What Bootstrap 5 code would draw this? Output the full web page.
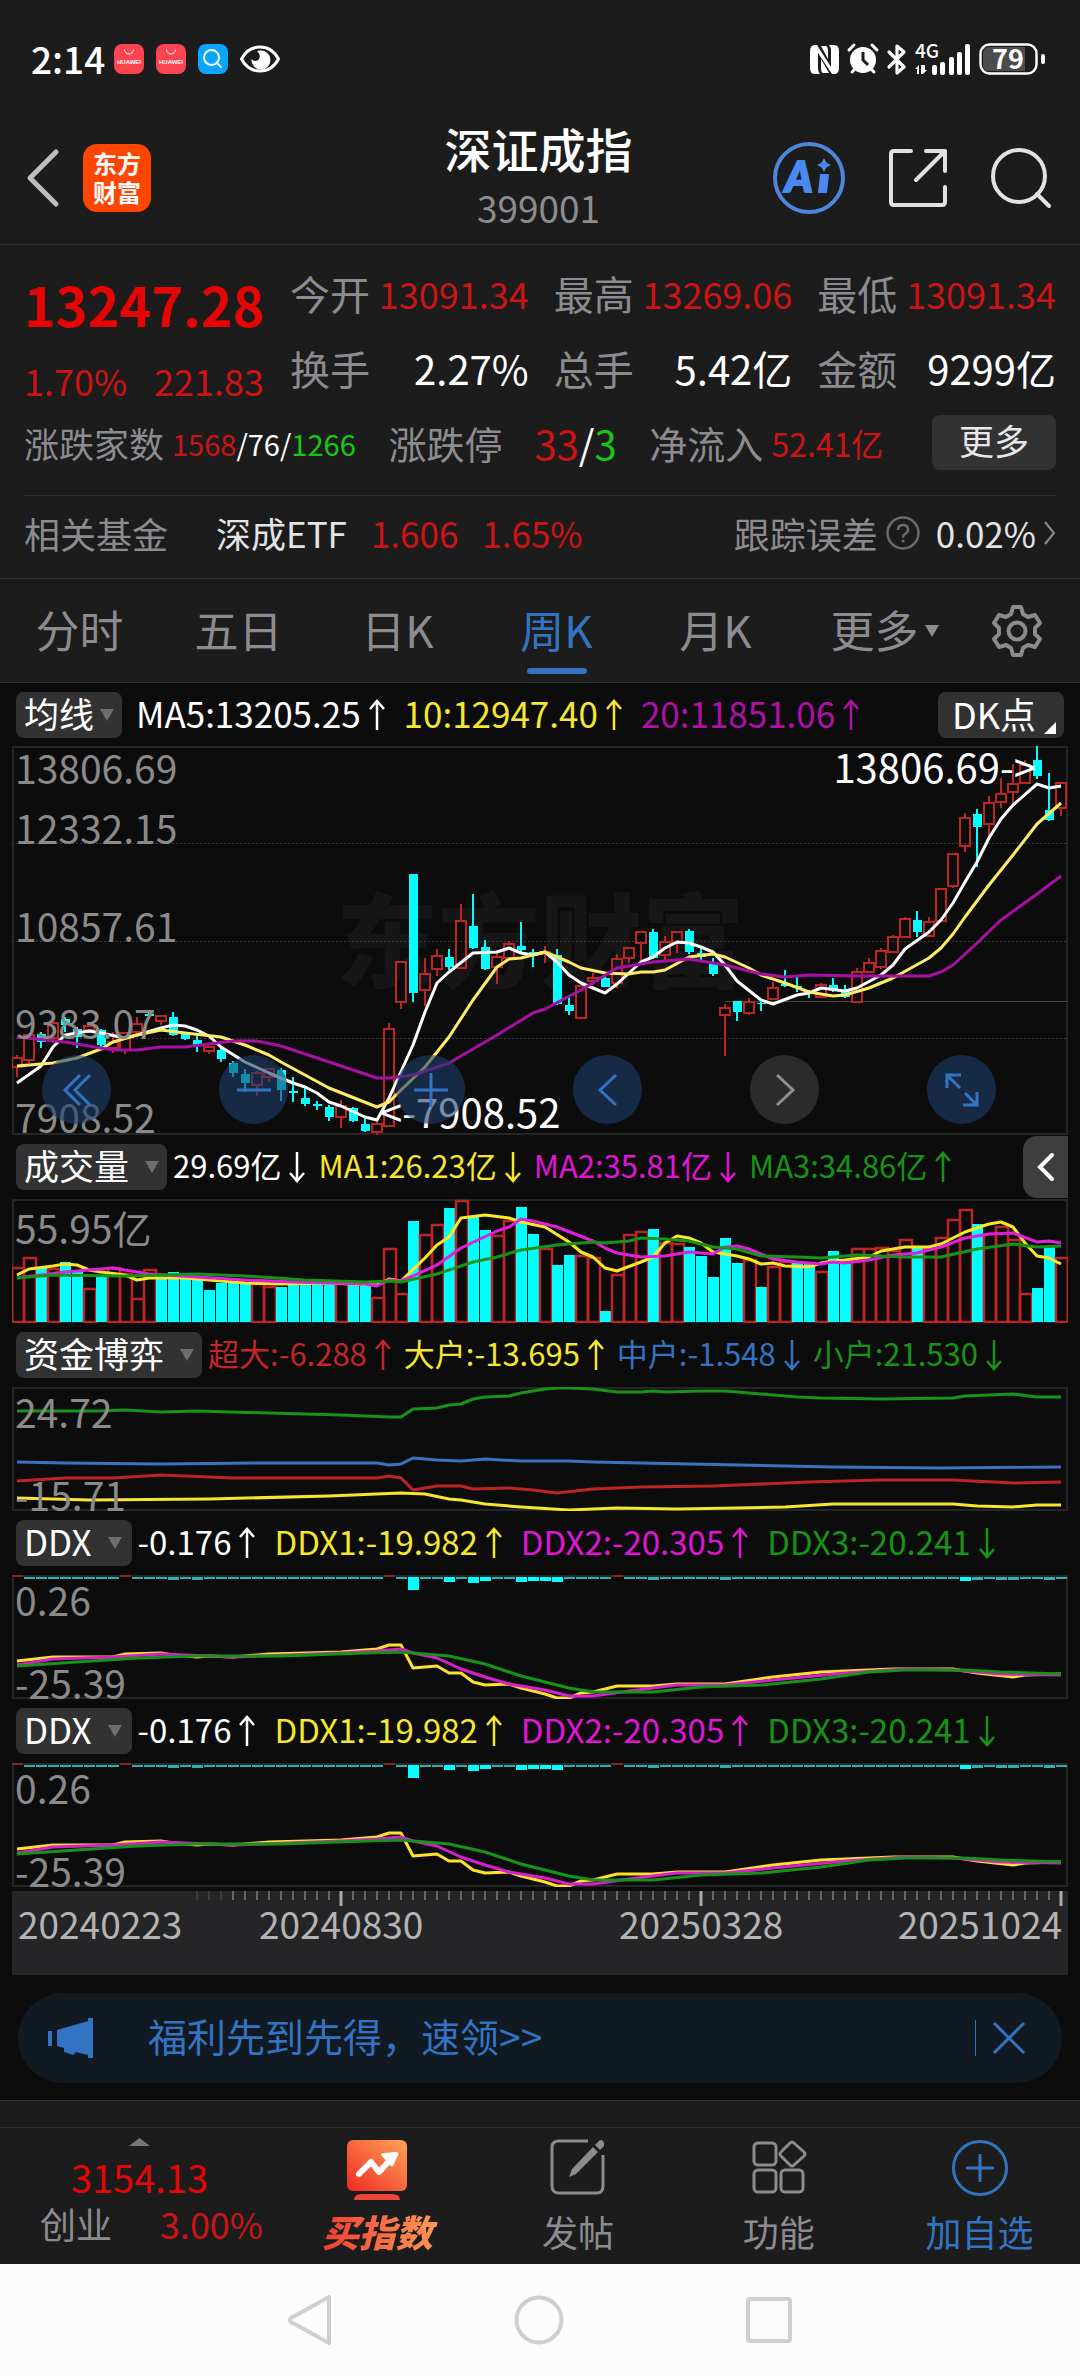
<!DOCTYPE html>
<html lang="zh-CN" data-bs-theme="dark">
<head>
<meta charset="utf-8">
<meta name="viewport" content="width=device-width, initial-scale=1">
<title>深证成指 399001</title>
<link href="https://cdn.jsdelivr.net/npm/bootstrap@5.3.0/dist/css/bootstrap.min.css" rel="stylesheet">
<style>
  :root {
    --panel: #1c1c1c; --canvas: #0c0c0c; --rule: #323236; --muted: #8c8c90;
    --up: #cc1414; --down: #14c814; --accent: #3374c2; --lemon: #f5e62e; --pink: #e015d6; --leaf: #179417;
  }
  body { background: var(--canvas); color: #fff; font-family: "Noto Sans CJK SC", "Noto Sans", sans-serif; font-size: 36px; line-height: 46px; }
  svg { display: block; overflow: visible; }
  button, a { color: inherit; text-decoration: none; white-space: nowrap; }
  button { border: 0; background: none; padding: 0; }
  .panel { background: var(--panel); }
  .hairline { border-bottom: 1px solid var(--rule); }
  .tone-muted { color: var(--muted); } .tone-up { color: var(--up); } .tone-down { color: var(--down); }
  .tone-accent { color: var(--accent); } .tone-lemon { color: var(--lemon); } .tone-soft { color: #e4e4e4; }
  .tone-pink { color: var(--pink); } .tone-leaf { color: var(--leaf); } .tone-violet { color: #b010a8; } .tone-brick { color: #c22626; }

  .sysbar { padding: 38px 35px 30px 31px; line-height: 42px; }
  .clock { font-size: 37px; font-weight: 500; margin-right: 9px; padding-bottom: 2px; line-height: 40px; }
  .gap-app { gap: 12px; } .gap-sys { gap: 8px; }

  .titlebar { padding: 12px 29px 10px 26px; }
  .titlebar h1 { font-size: 47px; line-height: 60px; margin: 0 0 6px; font-weight: 500; }
  .heading { margin-top: -4px; padding-bottom: 4px; }
  .code { font-size: 37px; }
  .brand { width: 68px; height: 68px; border-radius: 14px; background: #ff4600; font-size: 24px; line-height: 29px; font-weight: 700; margin-left: 24px; padding-bottom: 3px; }
  .tools { gap: 44px; }

  .quote { padding: 12px 24px 0; }
  .last { width: 240px; padding-top: 9px; }
  .last-price { font-size: 54px; line-height: 76px; font-weight: 700; color: #e60505; }
  .last-chg { line-height: 52px; margin-top: 12px; }
  .facts { display: grid; grid-template-columns: repeat(3, 1fr); column-gap: 25px; margin-left: 26px; }
  .fact, .breadth { height: 75px; white-space: nowrap; padding-bottom: 4px; }
  .label-lg, .num-lg { font-size: 40px; }
  .text-29 { font-size: 29px; } .text-32 { font-size: 32px; } .text-35 { font-size: 35px; } .text-38 { font-size: 38px; }
  .more-btn { background: #323232; border-radius: 8px; padding: 2px 27px 7px; color: #e8e8e8; font-size: 35px; }
  .fund { border-top: 1px solid #2a2a2a; margin-top: 13px; padding: 14px 0 22px; }

  .periods .nav-link { width: 159px; padding: 20px 0 0; font-size: 44px; line-height: 60px; color: var(--muted); text-align: center; }
  .periods .nav-link::after { content: ""; display: block; width: 60px; height: 6px; border-radius: 3px; margin: 9px auto 8px; }
  .periods .nav-link.active { color: var(--accent); }
  .periods .nav-link.active::after { background: var(--accent); }
  .tri-down { display: inline-block; border: 7px solid transparent; border-top: 12px solid currentColor; border-bottom: 0; }
  .periods .tri-down { position: absolute; margin: 26px 0 0 6px; }

  .charts { padding: 0 12px; }
  .readout { height: 64px; padding-left: 4px; white-space: nowrap; font-size: 31px; }
  .readout.first { height: 63px; font-size: 35px; }
  .readout.wide { font-size: 33px; }
  .picker { background: #323232; border-radius: 8px; font-size: 35px; line-height: 42px; padding: 0 8px 4px; margin-right: 6px; display: flex; align-items: center; gap: 16px; flex: none; }
  .picker .tri-down { color: #6e6e6e; margin-top: 4px; }
  .first .picker { gap: 6px; margin-right: 14px; }
  .wide .picker { padding-right: 10px; }
  .vals { gap: 12px; padding-bottom: 4px; } .first .vals { gap: 18px; } .wide .vals { gap: 18px; }
  .vals > span { display: flex; align-items: center; gap: 7px; }
  .vals svg { margin-top: 4px; flex: none; }
  .dk { background: #323232; border-radius: 8px; padding: 0 8px 4px 14px; font-size: 36px; line-height: 42px; margin-right: 4px; display: flex; gap: 8px; align-items: flex-end; }
  .fold { background: #3e3e3e; border-radius: 14px 0 0 14px; width: 45px; height: 62px; }
  .plot { position: relative; }
  .plot svg.draw { width: 100%; position: relative; overflow: hidden; }
  .tag { position: absolute; left: 3px; font-size: 39px; line-height: 40px; color: #8a8a8a; white-space: nowrap; }
  .mark-text { position: absolute; font-size: 40px; line-height: 40px; white-space: nowrap; }
  .watermark { position: absolute; inset: 125px 0 auto; text-align: center; font-size: 102px; line-height: 130px; font-weight: 900; color: #161616; }
  .pads { position: absolute; left: 30px; right: 72px; top: 309px; }
  .pad-btn { width: 69px; height: 69px; border-radius: 50%; background: rgba(30, 64, 110, .6); color: var(--accent); display: flex; align-items: center; justify-content: center; }
  .pad-btn.off { background: #2b2b2b; color: #8f8f8f; }
  .axis { background: #252527; margin-top: 4px; padding-bottom: 32px; color: #b4b4b4; font-size: 37px; line-height: 40px; }
  .dates { display: grid; grid-template-columns: 241px 360px 1fr; padding: 0 6px; margin-top: -3px; }

  .promo { margin: 18px 18px 17px; background: #111922; border-radius: 45px; padding: 22px 36px 22px 30px; font-size: 39px; line-height: 40px; color: var(--accent); }
  .promo-link { padding: 0 0 6px 54px; }
  .promo .split { width: 1px; height: 36px; background: var(--accent); margin-right: 16px; }
  .strip { height: 28px; border-top: 1px solid var(--rule); border-bottom: 1px solid #2a2a2a; }
  .dock { height: 136px; }
  .peek { width: 277px; padding: 10px 14px 0 40px; }
  .peek-last { color: #e60505; }
  .dock-item { flex: 1; display: flex; flex-direction: column; align-items: center; padding-top: 10px; gap: 10px; }
  .hot { font-weight: 900; font-style: italic; font-size: 37px; background: linear-gradient(90deg, #ee3a30, #ff9a56); -webkit-background-clip: text; background-clip: text; color: transparent; padding: 0 6px; }
  .softkeys { background: #fcfcfc; height: 112px; gap: 182px; }
</style>
</head>
<body>

<svg class="d-none" aria-hidden="true">
  <symbol id="rise" viewBox="0 0 18 32"><path d="M9 31V2M2 10l7-8 7 8" fill="none" stroke="currentColor" stroke-width="2.500"/></symbol>
  <symbol id="fall" viewBox="0 0 18 32"><path d="M9 1v29M2 22l7 8 7-8" fill="none" stroke="currentColor" stroke-width="2.500"/></symbol>
</svg>

<header class="panel hairline">
  <div class="sysbar d-flex justify-content-between align-items-center">
    <div class="d-flex align-items-center">
      <span class="clock">2:14</span>
      <div class="d-flex align-items-center gap-app">
        <svg width="30" height="30" viewBox="0 0 30 30"><rect width="30" height="30" rx="8" fill="#fb4450"/><path d="M10.500 5.500a4.500 4.500 0 0 0 9 0" fill="none" stroke="#fff"/><text x="15" y="19.500" font-size="6" font-weight="700" text-anchor="middle" fill="#fff" font-family="Liberation Sans">HUAWEI</text></svg>
        <svg width="30" height="30" viewBox="0 0 30 30"><rect width="30" height="30" rx="8" fill="#fb4450"/><path d="M10.500 5.500a4.500 4.500 0 0 0 9 0" fill="none" stroke="#fff"/><text x="15" y="19.500" font-size="6" font-weight="700" text-anchor="middle" fill="#fff" font-family="Liberation Sans">HUAWEI</text></svg>
        <svg width="30" height="30" viewBox="0 0 30 30"><rect width="30" height="30" rx="8" fill="#08a6fc"/><g fill="none" stroke="#fff" stroke-width="2" stroke-linecap="round"><circle cx="13.500" cy="13.500" r="7.500"/><path d="m19 19 4 4"/></g></svg>
        <svg width="40" height="30" viewBox="0 0 40 30"><path d="M1.500 15C10-1 30-1 38.500 15 30 31 10 31 1.500 15z" fill="none" stroke="#fff" stroke-width="3"/><path d="M20 6.500a9.500 9.500 0 1 1-8.500 8.500c2 3 7 2.500 8-1 .8-3-.3-5-2.500-7z" fill="#fff"/></svg>
      </div>
    </div>
    <div class="d-flex align-items-center gap-sys">
      <svg width="29" height="29" viewBox="0 0 29 29"><path d="M5 0h2l14 22V6q0-4-2-6h5q5 0 5 6v17q0 6-5 6h-2L8 8v15q0 4 2 6H5q-5 0-5-6V6q0-6 5-6z" fill="#fff"/><path d="M11 1h5q2 1 2 4v9zM11 14l8 14h-6q-2-1-2-4z" fill="#fff"/></svg>
      <svg width="32" height="30" viewBox="0 0 32 30"><circle cx="16" cy="16" r="13" fill="#fff"/><path d="M16 8v8l5 5" fill="none" stroke="#1c1c1c" stroke-width="3"/><path d="M2 6l5-5M30 6l-5-5M5 28l3-3M27 28l-3-3" stroke="#fff" stroke-width="3" stroke-linecap="round"/></svg>
      <svg width="20" height="31" viewBox="0 0 20 31"><path d="M2 8l15 15-7 6V2l7 6L2 23" fill="none" stroke="#fff" stroke-width="3.200" stroke-linejoin="round" stroke-linecap="round"/></svg>
      <svg width="56" height="31" viewBox="0 0 56 31" fill="#fff"><text x="0" y="14" font-size="19" font-weight="500">4G</text><path d="M4 21v9H2V25H0zM6 21h2v9H6zM8 30l4-4h-2v-5H8z"/><rect x="17" y="21" width="5" height="10" rx="2"/><rect x="25" y="18" width="5" height="13" rx="2"/><rect x="34" y="13" width="5" height="18" rx="2"/><rect x="42" y="8" width="5" height="23" rx="2"/><rect x="50" y="0" width="5" height="31" rx="2"/></svg>
      <svg width="66" height="32" viewBox="0 0 66 32"><rect x="1.500" y="1.500" width="56" height="29" rx="9" fill="none" stroke="#fff" stroke-width="2.400"/><path d="M10 4h36v24H10q-6 0-6-6V10q0-6 6-6z" fill="#4c4c4c"/><rect x="62" y="11" width="4" height="10" rx="2" fill="#fff"/><text x="29" y="26" font-size="27" font-weight="700" text-anchor="middle" fill="#fff">79</text></svg>
    </div>
  </div>

  <div class="titlebar d-flex align-items-center">
    <div class="d-flex align-items-center flex-fill w-25">
      <button aria-label="返回"><svg width="33" height="56" viewBox="0 0 33 56"><path d="M30 2 4 28l26 26" fill="none" stroke="#bebebe" stroke-width="5" stroke-linecap="round" stroke-linejoin="round"/></svg></button>
      <a href="#" class="brand d-flex align-items-center text-center"><span class="w-100">东方<br>财富</span></a>
    </div>
    <div class="heading text-center">
      <h1>深证成指</h1>
      <div class="code tone-muted">399001</div>
    </div>
    <div class="tools d-flex align-items-center justify-content-end flex-fill w-25">
      <button aria-label="AI"><svg width="72" height="72" viewBox="0 0 72 72"><circle cx="36" cy="36" r="34" fill="none" stroke="#4f86dc" stroke-width="4"/><text x="12" y="50" font-family="Lato" font-weight="900" font-style="italic" font-size="42" fill="#4a8af0" stroke="#4a8af0" stroke-width="2">A</text><path d="M47 32h9l-2 19h-9z" fill="#4a8af0"/><path d="m51 17 2 4 4 2-4 2-2 4-2-4-4-2 4-2z" fill="#4a8af0" stroke="#4a8af0"/></svg></button>
      <button aria-label="分享"><svg width="58" height="58" viewBox="0 0 58 58" fill="none" stroke="#e2e2e2" stroke-width="4" stroke-linecap="round" stroke-linejoin="round"><path d="M22 2H5Q2 2 2 5v48q0 3 3 3h48q3 0 3-3V38M37 2h19v20M56 2 27 31"/></svg></button>
      <button aria-label="搜索"><svg width="60" height="60" viewBox="0 0 60 60" fill="none" stroke="#e2e2e2" stroke-width="4" stroke-linecap="round"><circle cx="28" cy="28" r="26"/><path d="m46 46 12 12"/></svg></button>
    </div>
  </div>
</header>

<section class="panel hairline quote">
  <div class="d-flex align-items-start">
    <div class="last">
      <div class="last-price">13247.28</div>
      <div class="last-chg d-flex justify-content-between tone-up"><span>1.70%</span><span>221.83</span></div>
    </div>
    <div class="facts flex-fill">
      <div class="fact d-flex align-items-center justify-content-between"><span class="label-lg tone-muted">今开</span><span class="tone-up">13091.34</span></div>
      <div class="fact d-flex align-items-center justify-content-between"><span class="label-lg tone-muted">最高</span><span class="tone-up">13269.06</span></div>
      <div class="fact d-flex align-items-center justify-content-between"><span class="label-lg tone-muted">最低</span><span class="tone-up">13091.34</span></div>
      <div class="fact d-flex align-items-center justify-content-between"><span class="label-lg tone-muted">换手</span><span class="num-lg">2.27%</span></div>
      <div class="fact d-flex align-items-center justify-content-between"><span class="label-lg tone-muted">总手</span><span class="num-lg">5.42亿</span></div>
      <div class="fact d-flex align-items-center justify-content-between"><span class="label-lg tone-muted">金额</span><span class="num-lg">9299亿</span></div>
    </div>
  </div>
  <div class="breadth d-flex align-items-center justify-content-between">
    <div class="d-flex align-items-center"><span class="tone-muted text-35">涨跌家数</span><span class="text-29 ms-2"><span class="tone-up">1568</span>/76/<span class="tone-down">1266</span></span></div>
    <div class="d-flex align-items-center"><span class="tone-muted text-38">涨跌停</span><span class="num-lg ms-4 ps-2"><span class="tone-up">33</span>/<span class="tone-down">3</span></span></div>
    <div class="d-flex align-items-center me-3"><span class="tone-muted text-38">净流入</span><span class="text-32 tone-up ms-2">52.41亿</span></div>
    <button class="more-btn">更多</button>
  </div>
  <div class="fund d-flex align-items-center">
    <span class="tone-muted me-5">相关基金</span>
    <a href="#" class="tone-soft text-35 me-4">深成ETF</a>
    <span class="tone-up text-35 me-4">1.606</span>
    <span class="tone-up text-35">1.65%</span>
    <a href="#" class="ms-auto d-flex align-items-center">
      <span class="tone-muted">跟踪误差</span>
      <svg class="ms-2 me-3" width="34" height="34" viewBox="0 0 34 34"><circle cx="17" cy="17" r="15.500" fill="none" stroke="#6c6c70" stroke-width="2.500"/><path d="M12 14q0-5 5-5t5 4.500q0 3-3 4.500-2 1-2 3.500" fill="none" stroke="#6c6c70" stroke-width="2.500"/><circle cx="17" cy="25" r="1.600" fill="#6c6c70"/></svg>
      <span class="tone-soft text-35">0.02%</span>
      <svg class="ms-2" width="12" height="24" viewBox="0 0 12 24"><path d="m1 1 9 11-9 11" fill="none" stroke="#8c8c90" stroke-width="2"/></svg>
    </a>
  </div>
</section>

<nav class="panel hairline periods d-flex align-items-center">
  <a class="nav-link" href="#">分时</a>
  <a class="nav-link" href="#">五日</a>
  <a class="nav-link" href="#">日K</a>
  <a class="nav-link active" href="#">周K</a>
  <a class="nav-link" href="#">月K</a>
  <a class="nav-link" href="#">更多<i class="tri-down"></i></a>
  <button class="mx-auto" aria-label="设置"><svg width="52" height="52" viewBox="0 0 52 52" fill="none" stroke="#8c8c90" stroke-width="4" stroke-linejoin="round"><path d="M22 2h8l2 7 5 3 7-2 5 8-5 5v6l5 5-5 8-7-2-5 3-2 7h-8l-2-7-5-3-7 2-5-8 5-5v-6l-5-5 5-8 7 2 5-3z"/><circle cx="26" cy="26" r="8.500"/></svg></button>
</nav>

<main class="charts">
  <div class="readout first d-flex align-items-center">
    <button class="picker">均线<i class="tri-down"></i></button>
    <div class="vals d-flex"><span>MA5:13205.25<svg width="18" height="32"><use href="#rise"/></svg></span><span class="tone-lemon">10:12947.40<svg width="18" height="32"><use href="#rise"/></svg></span><span class="tone-violet">20:11851.06<svg width="18" height="32"><use href="#rise"/></svg></span></div>
    <button class="dk ms-auto">DK点<svg width="12" height="12"><path d="M12 0v12H0z" fill="#fff"/></svg></button>
  </div>
  <div class="plot" id="kline">
    <div class="watermark">东方财富</div>
    <span class="tag" style="top:1px">13806.69</span><span class="tag" style="top:61px">12332.15</span><span class="tag" style="top:159px">10857.61</span><span class="tag" style="top:256px">9383.07</span><span class="tag" style="top:350px">7908.52</span>
    <span class="mark-text" style="top:0;right:32px">13806.69-&gt;</span>
    <span class="mark-text" style="top:345px;left:368px">&lt;-7908.52</span>
    <div class="pads d-flex justify-content-between">
      <button class="pad-btn" aria-label="最早"><svg width="30" height="34" viewBox="0 0 30 34" fill="none" stroke="currentColor" stroke-width="3"><path d="M18 2 3 17l15 15M28 2 13 17l15 15"/></svg></button>
      <button class="pad-btn" aria-label="缩小"><svg width="34" height="34" viewBox="0 0 34 34" stroke="currentColor" stroke-width="3"><path d="M0 17h34"/></svg></button>
      <button class="pad-btn" aria-label="放大"><svg width="34" height="34" viewBox="0 0 34 34" stroke="currentColor" stroke-width="3"><path d="M0 17h34M17 0v34"/></svg></button>
      <button class="pad-btn" aria-label="向前"><svg width="20" height="34" viewBox="0 0 20 34" fill="none" stroke="currentColor" stroke-width="3"><path d="M18 2 2 17l16 15"/></svg></button>
      <button class="pad-btn off" aria-label="向后"><svg width="20" height="34" viewBox="0 0 20 34" fill="none" stroke="currentColor" stroke-width="3"><path d="m2 2 16 15L2 32"/></svg></button>
      <button class="pad-btn" aria-label="全屏"><svg width="36" height="36" viewBox="0 0 36 36" fill="none" stroke="currentColor" stroke-width="3"><path d="M3 16V3h14M3 3l13 13M33 20v13H19M33 33 21 21"/></svg></button>
    </div>
  </div>

  <div class="readout d-flex align-items-center">
    <button class="picker">成交量<i class="tri-down"></i></button>
    <div class="vals d-flex"><span>29.69亿<svg width="18" height="32"><use href="#fall"/></svg></span><span class="tone-lemon">MA1:26.23亿<svg width="18" height="32"><use href="#fall"/></svg></span><span class="tone-pink">MA2:35.81亿<svg width="18" height="32"><use href="#fall"/></svg></span><span class="tone-leaf">MA3:34.86亿<svg width="18" height="32"><use href="#rise"/></svg></span></div>
    <button class="fold ms-auto d-flex align-items-center justify-content-center" aria-label="收起"><svg width="16" height="28" viewBox="0 0 16 28"><path d="M14 2 2 14l12 12" fill="none" stroke="#fff" stroke-width="4" stroke-linecap="round"/></svg></button>
  </div>
  <div class="plot" id="volume"><span class="tag" style="top:8px">55.95亿</span></div>

  <div class="readout d-flex align-items-center">
    <button class="picker">资金博弈<i class="tri-down"></i></button>
    <div class="vals d-flex"><span class="tone-brick">超大:-6.288<svg width="18" height="32"><use href="#rise"/></svg></span><span class="tone-lemon">大户:-13.695<svg width="18" height="32"><use href="#rise"/></svg></span><span class="tone-accent">中户:-1.548<svg width="18" height="32"><use href="#fall"/></svg></span><span class="tone-leaf">小户:21.530<svg width="18" height="32"><use href="#fall"/></svg></span></div>
  </div>
  <div class="plot" id="flow"><span class="tag" style="top:4px">24.72</span><span class="tag" style="top:87px">-15.71</span></div>

  <div class="readout wide d-flex align-items-center">
    <button class="picker">DDX<i class="tri-down"></i></button>
    <div class="vals d-flex"><span>-0.176<svg width="18" height="32"><use href="#rise"/></svg></span><span class="tone-lemon">DDX1:-19.982<svg width="18" height="32"><use href="#rise"/></svg></span><span class="tone-pink">DDX2:-20.305<svg width="18" height="32"><use href="#rise"/></svg></span><span class="tone-leaf">DDX3:-20.241<svg width="18" height="32"><use href="#fall"/></svg></span></div>
  </div>
  <div class="plot ddx"><span class="tag" style="top:4px">0.26</span><span class="tag" style="top:87px">-25.39</span></div>

  <div class="readout wide d-flex align-items-center">
    <button class="picker">DDX<i class="tri-down"></i></button>
    <div class="vals d-flex"><span>-0.176<svg width="18" height="32"><use href="#rise"/></svg></span><span class="tone-lemon">DDX1:-19.982<svg width="18" height="32"><use href="#rise"/></svg></span><span class="tone-pink">DDX2:-20.305<svg width="18" height="32"><use href="#rise"/></svg></span><span class="tone-leaf">DDX3:-20.241<svg width="18" height="32"><use href="#fall"/></svg></span></div>
  </div>
  <div class="plot ddx"><span class="tag" style="top:4px">0.26</span><span class="tag" style="top:87px">-25.39</span></div>

  <div class="axis">
    <div id="ticks"></div>
    <div class="dates"><span>20240223</span><span>20240830</span><span class="d-flex justify-content-between"><span>20250328</span><span>20251024</span></span></div>
  </div>
</main>

<aside class="promo d-flex align-items-center">
  <svg width="46" height="40" viewBox="0 0 46 40" fill="#3374c2"><path d="M0 13h4v15H0zM9 12 40 3V0h5v40h-5v-3l-12-3-3 3-9-3v-4l-7-2z"/></svg>
  <a href="#" class="promo-link flex-fill">福利先到先得，速领&gt;&gt;</a>
  <span class="split"></span>
  <button aria-label="关闭"><svg width="34" height="34" viewBox="0 0 34 34"><path d="m2 2 30 30M32 2 2 32" stroke="#3374c2" stroke-width="3"/></svg></button>
</aside>

<footer>
  <div class="panel strip"></div>
  <div class="panel dock d-flex">
    <a href="#" class="peek d-flex flex-column">
      <svg class="align-self-center me-4" width="21" height="8" viewBox="0 0 21 8"><path d="M10.500 0 21 8H0z" fill="#77777a"/></svg>
      <span class="text-38 text-center me-4 mt-2 peek-last">3154.13</span>
      <span class="d-flex justify-content-between"><span class="tone-muted">创业</span><span class="tone-up">3.00%</span></span>
    </a>
    <a href="#" class="dock-item">
      <svg width="60" height="60" viewBox="0 0 60 60"><defs><linearGradient id="sun" x1="0" y1="1" x2="1" y2="0"><stop offset="0" stop-color="#f02a22"/><stop offset="1" stop-color="#ffa458"/></linearGradient></defs><rect y="2" width="60" height="51" rx="6" fill="url(#sun)"/><path d="M7 62q0-6 8-6h30q8 0 8 6z" fill="#ec4638"/><path d="M12 36 24 24l8 10 13-14" fill="none" stroke="#fff" stroke-width="6" stroke-linecap="round" stroke-linejoin="round"/><path d="M34 17q0-2 3-2l12-1q3 0 2 3l-5 11q-1 1-2 0z" fill="#fff"/></svg>
      <span class="hot">买指数</span>
    </a>
    <a href="#" class="dock-item tone-muted">
      <svg width="56" height="60" viewBox="0 0 56 60"><path d="M38 3H9Q2 3 2 9v39q0 7 7 7h38q6 0 6-7V17" fill="none" stroke="#8c8c90" stroke-width="3"/><path d="m43 9 5 5-22 22-7 3 3-8zM45 7l4-4q2-2 4 0t1 5l-4 4z" fill="#8c8c90"/></svg>
      <span>发帖</span>
    </a>
    <a href="#" class="dock-item tone-muted">
      <svg width="54" height="60" viewBox="0 0 54 60" fill="none" stroke="#8c8c90" stroke-width="3"><rect x="2" y="5" width="22" height="22" rx="4"/><rect x="2" y="32" width="22" height="22" rx="4"/><rect x="29" y="32" width="22" height="22" rx="4"/><path d="M38 5q2-2 4 0l10 9q2 2 0 4l-10 9q-2 2-4 0l-9-9q-2-2 0-4z"/></svg>
      <span>功能</span>
    </a>
    <a href="#" class="dock-item tone-accent">
      <svg width="56" height="60" viewBox="0 0 56 60" fill="none" stroke="#3374c2" stroke-width="3"><circle cx="28" cy="30" r="26.500"/><path d="M14 30h28M28 16v28"/></svg>
      <span>加自选</span>
    </a>
  </div>
  <div class="softkeys d-flex align-items-center justify-content-center">
    <button aria-label="后退"><svg width="44" height="52" viewBox="0 0 44 52"><path d="M41 3v46L3 28q-2-2 0-4z" fill="none" stroke="#cfcfcf" stroke-width="4" stroke-linejoin="round"/></svg></button>
    <button aria-label="主页"><svg width="50" height="50" viewBox="0 0 50 50"><circle cx="25" cy="25" r="22.500" fill="none" stroke="#cfcfcf" stroke-width="4"/></svg></button>
    <button aria-label="最近任务"><svg width="46" height="46" viewBox="0 0 46 46"><rect x="2" y="2" width="42" height="42" rx="2" fill="none" stroke="#cfcfcf" stroke-width="4"/></svg></button>
  </div>
</footer>

<script src="https://cdn.jsdelivr.net/npm/bootstrap@5.3.0/dist/js/bootstrap.bundle.min.js"></script>
<script>
const W = 1056, STEP = 12, X0 = 5;
const UP = '#bd2525', DOWN = '#00ffff';
const x = i => X0 + i * STEP;

function frame(h, body) {
  return `<svg class="draw" height="${h}" viewBox="0 0 ${W} ${h}" preserveAspectRatio="none">
    <rect x="1" y="1" width="${W - 2}" height="${h - 2}" fill="none" stroke="#262626" stroke-width="2"/>${body}</svg>`;
}
function line(points, color, w = 3) {
  const p = points.trim().split(/\s+/).map(s => { const [i, y] = s.split(','); return x(+i) + ',' + y; }).join(' ');
  return `<polyline points="${p}" fill="none" stroke="${color}" stroke-width="${w}" stroke-linejoin="round"/>`;
}
function mount(el, h, body) {
  const t = document.createElement('div');
  t.innerHTML = frame(h, body);
  const mark = el.querySelector('.watermark');
  mark ? mark.after(t.firstChild) : el.prepend(t.firstChild);
}

// kind, high, body top, body bottom, low
const candles = `r309,312,321,331 r288,289,314,317 c286,288,296,302 r276,277,292,297 c271,273,279,286 c281,283,291,302 r276,280,284,287 c283,284,299,301
r286,296,302,307 r286,287,304,308 r271,278,286,287 c267,268,270,271 r269,270,275,279 c266,271,289,290 c286,287,293,294 c288,294,300,306 r300,301,305,308
c301,304,313,316 c315,317,327,331 c323,328,337,346 r325,327,339,350 r322,323,331,336 c322,324,344,355 c331,345,347,356 c341,352,358,360 c355,358,360,364
c359,361,371,375 r354,360,371,382 c361,362,375,376 c372,378,385,386 r374,378,386,389 r277,283,380,381 r215,216,256,263 c128,128,247,256 r212,228,244,260
r203,210,223,230 c203,211,221,224 r158,175,222,223 c148,180,202,203 c194,201,223,224 r204,211,221,238 r195,198,212,214 c176,200,204,206 c203,206,210,221
r200,206,208,217 c203,209,258,259 c251,259,265,269 r240,240,272,272 r227,232,235,239 c230,232,241,241 r208,213,237,242 r201,202,212,217 r186,186,197,214
c183,186,212,213 r190,196,209,214 r186,186,197,207 c183,185,206,208 c202,207,211,214 c212,217,228,230 r258,262,269,310 c255,255,266,275 r252,256,267,269
c256,257,258,265 r236,242,253,254 c224,238,240,241 c230,240,242,246 c244,246,248,252 r237,239,251,252 c232,239,243,246 c239,245,251,252 r222,226,256,256
r212,217,226,226 r202,205,221,223 r189,191,206,207 r171,173,191,191 c165,174,186,191 r171,176,190,190 r143,143,175,175 r108,108,140,142 r67,72,100,106
c63,68,81,121 r50,57,78,91 r32,48,56,62 r18,38,46,57 r14,19,37,37 c0,14,30,33 c27,64,74,75 r37,37,62,70`.split(/\s+/);

let k = '';
for (const y of [97, 195, 292]) k += `<path d="M0 ${y}.5H${W}" stroke="#3a3a3a" stroke-dasharray="2 2"/>`;
k += `<path d="M${x(59)} 255.500H${W}" stroke="#444"/>`;
candles.forEach((c, i) => {
  const [h, t, b, l] = c.slice(1).split(',').map(Number), cx = x(i);
  if (c[0] === 'r') k += `<path d="M${cx} ${h}V${t}M${cx} ${b}V${l}M${cx - 5} ${t}h10V${b}h-10z" fill="none" stroke="${UP}" stroke-width="2"/>`;
  else k += `<path d="M${cx} ${h}V${l}" stroke="${DOWN}" stroke-width="2"/><rect x="${cx - 4}" y="${t}" width="9" height="${b - t}" fill="${DOWN}"/>`;
});
k += line('0,337 2,320 3,301 4,289 6,285 7,287 9,292 10,289 12,282 13,279 14,280 15,284 16,290 17,301 19,316 21,327 23,337 24,341 25,347 26,356 27,360 29,371 30,374 31,352 33,299 34,266 35,237 36,226 38,207 40,206 41,202 42,207 43,209 44,206 45,216 46,229 47,237 49,247 50,238 52,216 53,211 54,202 55,196 56,197 57,201 58,206 59,219 60,235 62,254 63,258 65,249 66,247 67,242 69,245 70,242 72,229 73,219 74,203 76,186 77,174 78,157 79,136 80,116 81,92 82,73 83,59 85,38 86,42 87,40', '#fff');
k += line('0,320 3,317 5,312 7,303 8,296 10,289 12,284 14,287 17,291 19,299 21,309 22,316 26,342 30,361 31,356 32,344 34,321 36,291 38,254 40,221 41,213 42,212 44,206 46,216 47,222 49,227 51,228 52,226 53,226 54,224 56,211 58,208 59,211 61,222 62,229 64,237 66,246 68,250 69,249 71,242 73,232 76,212 77,202 78,188 79,171 81,139 83,109 85,78 87,57', '#ffec66');
k += line('0,291 4,296 8,304 10,304 12,301 14,301 18,295 20,295 22,300 26,316 30,332 31,332 33,329 36,317 40,289 43,267 44,263 47,244 50,222 53,216 56,213 59,219 62,228 64,231 66,229 70,230 76,230 77,226 78,219 80,197 82,174 85,148 87,130', '#a80fa4');
mount(document.getElementById('kline'), 389, k);

const vols = `r68 r58 c69 r69 c63 c73 r89 c78 r68 r74 r99 r70 c78 c73 c77 c78 c91 c84 c84 c85 r84 r87 c88 c82 c83 c83 c84 r84 c84 c87 r98 r49 r94 c22 r35 r25 c9 r1 c18 c31 r36 r21 c8 c35
r49 c66 c56 r56 r58 c112 r75 r35 r32 c30 r43 r44 c48 c57 c78 c39 c64 r60 c88 r67 r62 c64 c65 r72 c52 c65 r49 r49 r48 r51 r40 c49 r48 r38 r20 r10 c25 r34 r27 r40 r94 c89 c48 r58`.split(/\s+/);
let v = '';
vols.forEach((s, i) => {
  const y = +s.slice(1), cx = x(i);
  v += s[0] === 'r' ? `<rect x="${cx - 5}" y="${y + 1}" width="12" height="${122 - y}" fill="none" stroke="${UP}" stroke-width="2.500"/>`
                    : `<rect x="${cx - 5}" y="${y}" width="11" height="${123 - y}" fill="${DOWN}"/>`;
});
v += line('0,76 1,70 3,67 4,65 5,66 6,71 7,73 9,76 10,81 11,79 14,79 16,81 19,84 22,85 26,84 30,86 31,80 32,82 34,59 35,46 36,38 37,19 39,16 41,19 42,23 44,28 46,43 47,53 48,58 49,69 50,72 52,63 53,58 54,44 55,37 56,39 57,44 58,53 60,57 61,60 62,65 63,64 64,67 66,68 67,64 68,62 69,61 71,58 72,52 74,48 76,48 77,45 79,33 81,25 82,23 83,28 84,44 85,57 86,59 87,65', '#fbe926');
v += line('0,79 2,76 4,73 8,69 9,71 11,75 15,78 19,81 23,83 29,85 30,87 31,81 32,82 33,77 35,66 37,49 40,32 41,28 42,20 43,22 45,28 48,42 49,49 50,54 52,58 54,57 56,53 58,55 59,48 60,47 61,50 63,60 65,63 67,65 68,63 69,64 71,61 73,56 75,54 77,48 79,39 81,35 83,34 85,43 86,42 87,44', '#e020dc');
v += line('0,79 3,76 9,77 15,75 19,77 24,81 29,83 31,82 32,83 35,75 38,63 40,58 42,51 45,46 48,43 49,44 51,42 52,39 54,40 56,42 58,48 60,50 62,57 65,58 67,59 70,56 74,58 77,58 80,50 83,45 85,48 87,47', '#179417');
mount(document.getElementById('volume'), 124, v);

mount(document.getElementById('flow'), 124,
  line('0,24 7,24 9,23 12,25 15,24 21,26 27,28 31,30 32,30 33,22 35,21 36,18 37,17 38,12 39,10 41,9 42,6 44,2 45,1 46,1 48,2 50,5 52,5 53,4 54,5 57,4 59,4 62,7 65,10 67,11 72,12 78,11 79,9 83,7 85,10 87,10', '#179417') +
  line('0,75 4,76 12,77 20,76 30,76 31,78 32,77 33,71 35,73 37,74 39,72 42,74 46,74 48,75 56,77 68,80 77,81 87,80', '#3a74c0') +
  line('0,94 4,91 8,91 12,88 18,91 30,91 31,89 32,91 33,103 35,99 37,99 38,102 41,101 43,103 45,106 48,102 52,100 58,99 66,95 72,93 78,93 83,96 87,95', '#bd2525') +
  line('0,111 6,113 16,112 26,109 32,106 34,107 36,112 37,113 39,117 42,120 46,123 50,121 55,122 60,121 64,120 68,117 78,117 80,119 83,120 85,118 87,118', '#f5e62e'));

const deep = {33: 13, 36: 5, 38: 6, 39: 4, 42: 5, 43: 4, 44: 4, 45: 5, 13: 3, 15: 3, 53: 3, 59: 3, 79: 4, 80: 3, 82: 3, 83: 3, 86: 3};
const rise = new Set([0, 9, 31, 50]);
let d = '';
for (let i = 0; i < 88; i++) d += rise.has(i) ? `<rect x="${x(i) - 5}" y="0" width="11" height="2" fill="#8a2424"/>`
  : `<rect x="${x(i) - 5}" y="2" width="11" height="${deep[i] || 2}" fill="${deep[i] > 3 ? DOWN : '#2fb0b0'}"/>`;
d += line('0,86 3,82 6,82 8,82 9,79 12,78 13,80 15,82 16,81 18,82 21,79 27,77 30,74 31,70 32,70 33,93 35,91 36,98 37,98 38,107 39,110 41,109 42,113 44,119 45,123 46,123 47,118 48,117 50,111 53,111 55,109 59,109 63,102 67,97 73,94 78,94 80,98 83,102 84,100 87,99', '#ffe02e');
d += line('0,90 3,84 8,82 12,79 18,82 27,78 30,76 32,74 33,78 35,83 37,94 39,102 41,109 44,115 46,121 48,121 51,116 55,110 59,110 63,105 69,98 74,94 78,95 82,99 87,100', '#d81fd0');
d += line('0,91 5,87 10,83 15,81 22,81 29,78 32,77 36,81 39,89 42,101 46,113 48,117 53,117 57,112 62,110 67,104 71,97 74,95 79,95 82,97 87,99', '#179417');
document.querySelectorAll('.ddx').forEach(el => mount(el, 124, d));

let t = '';
for (let i = 15; i < 88; i++) {
  const major = i === 27 || i === 57 || i === 87;
  t += `<path d="M${x(i)} 0V${major ? 15 : 9}" stroke="${i < 18 ? '#555' : '#aaa'}" stroke-width="${major ? 3 : 1}"/>`;
}
document.getElementById('ticks').innerHTML = `<svg class="w-100" height="15" viewBox="0 0 ${W} 15" preserveAspectRatio="none">${t}</svg>`;
</script>
</body>
</html>
